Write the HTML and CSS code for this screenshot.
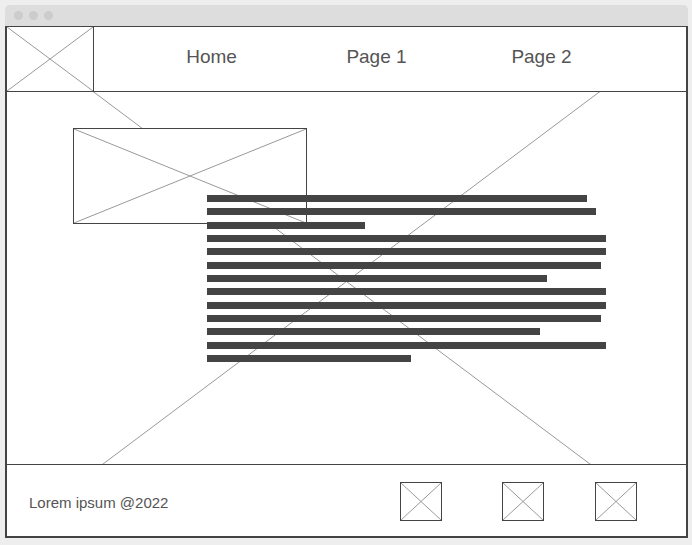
FILE: index.html
```html
<!DOCTYPE html>
<html lang="en">
<head>
    <meta charset="UTF-8">
    <meta name="viewport" content="width=device-width, initial-scale=1.0">
    <title>Wireframe</title>
    <link rel="stylesheet" href="styles.css">
</head>
<body>
    <div class="window">
        <div class="chrome">
            <span class="dot"></span>
            <span class="dot"></span>
            <span class="dot"></span>
        </div>

        <div class="frame">
            <!-- big placeholder behind the whole page -->
            <svg class="backdrop" viewBox="0 0 100 100" preserveAspectRatio="none">
                <line x1="0" y1="0" x2="100" y2="100" vector-effect="non-scaling-stroke"/>
                <line x1="100" y1="0" x2="0" y2="100" vector-effect="non-scaling-stroke"/>
            </svg>

            <header class="header">
                <div class="logo placeholder">
                    <svg viewBox="0 0 100 100" preserveAspectRatio="none">
                        <line x1="0" y1="0" x2="100" y2="100" vector-effect="non-scaling-stroke"/>
                        <line x1="100" y1="0" x2="0" y2="100" vector-effect="non-scaling-stroke"/>
                    </svg>
                </div>
                <nav class="nav">
                    <a href="#" class="nav-link">Home</a>
                    <a href="#" class="nav-link">Page 1</a>
                    <a href="#" class="nav-link">Page 2</a>
                </nav>
            </header>

            <main class="main">
                <div class="picture placeholder">
                    <svg viewBox="0 0 100 100" preserveAspectRatio="none">
                        <line x1="0" y1="0" x2="100" y2="100" vector-effect="non-scaling-stroke"/>
                        <line x1="100" y1="0" x2="0" y2="100" vector-effect="non-scaling-stroke"/>
                    </svg>
                </div>

                <div class="text-block">
                    <div class="bar" style="width: 380px"></div>
                    <div class="bar" style="width: 389px"></div>
                    <div class="bar" style="width: 158px"></div>
                    <div class="bar" style="width: 399px"></div>
                    <div class="bar" style="width: 399px"></div>
                    <div class="bar" style="width: 394px"></div>
                    <div class="bar" style="width: 340px"></div>
                    <div class="bar" style="width: 399px"></div>
                    <div class="bar" style="width: 399px"></div>
                    <div class="bar" style="width: 394px"></div>
                    <div class="bar" style="width: 333px"></div>
                    <div class="bar" style="width: 399px"></div>
                    <div class="bar" style="width: 204px"></div>
                </div>
            </main>

            <footer class="footer">
                <p class="copyright">Lorem ipsum @2022</p>
                <div class="icons">
                    <div class="icon placeholder">
                        <svg viewBox="0 0 100 100" preserveAspectRatio="none">
                            <line x1="0" y1="0" x2="100" y2="100" vector-effect="non-scaling-stroke"/>
                            <line x1="100" y1="0" x2="0" y2="100" vector-effect="non-scaling-stroke"/>
                        </svg>
                    </div>
                    <div class="icon placeholder">
                        <svg viewBox="0 0 100 100" preserveAspectRatio="none">
                            <line x1="0" y1="0" x2="100" y2="100" vector-effect="non-scaling-stroke"/>
                            <line x1="100" y1="0" x2="0" y2="100" vector-effect="non-scaling-stroke"/>
                        </svg>
                    </div>
                    <div class="icon placeholder">
                        <svg viewBox="0 0 100 100" preserveAspectRatio="none">
                            <line x1="0" y1="0" x2="100" y2="100" vector-effect="non-scaling-stroke"/>
                            <line x1="100" y1="0" x2="0" y2="100" vector-effect="non-scaling-stroke"/>
                        </svg>
                    </div>
                </div>
            </footer>
        </div>
    </div>
</body>
</html>
```

FILE: styles.css
```css
:root {
    --line: #444444;
    --cross: #999999;
    --text: #555555;
    --chrome: #dddddd;
}

* {
    box-sizing: border-box;
    margin: 0;
    padding: 0;
    font-family: 'Liberation Sans', Arial, sans-serif;
}

body {
    background-color: #eeeeee;
    height: 100vh;
}

.window {
    width: 683px;
    margin: 5px 0 0 5px;
}

.chrome {
    height: 21px;
    background-color: var(--chrome);
    border-radius: 5px 5px 0 0;
    display: flex;
    align-items: center;
    gap: 6px;
    padding-left: 9px;
}

.dot {
    width: 9px;
    height: 9px;
    border-radius: 50%;
    background-color: #cccccc;
}

.frame {
    position: relative;
    z-index: 0;
    height: 512px;
    background-color: white;
    border: 2px solid var(--line);
    border-top-width: 1px;
    display: flex;
    flex-direction: column;
}

.backdrop {
    position: absolute;
    inset: 0;
    width: 100%;
    height: 100%;
    z-index: -1;
}

svg line {
    stroke: var(--cross);
    stroke-width: 1;
}

.placeholder svg {
    display: block;
    width: 100%;
    height: 100%;
}

.header {
    height: 65px;
    background-color: white;
    border-bottom: 1px solid var(--line);
    display: flex;
}

.logo {
    width: 87px;
    border-right: 1px solid var(--line);
}

.nav {
    display: flex;
    align-items: center;
    padding-left: 35px;
}

.nav-link {
    width: 165px;
    text-align: center;
    font-size: 19px;
    color: var(--text);
    text-decoration: none;
    margin-top: -4px;
}

.main {
    height: 372px;
    padding-top: 36px;
}

.picture {
    width: 234px;
    height: 96px;
    margin-left: 66px;
    background-color: white;
    border: 1px solid var(--line);
}

.text-block {
    position: relative;
    margin: -29px 0 0 200px;
    display: flex;
    flex-direction: column;
    gap: 6.33px;
}

.bar {
    height: 7px;
    background-color: var(--line);
}

.footer {
    flex: 1;
    background-color: white;
    border-top: 1px solid var(--line);
    display: flex;
    align-items: center;
    padding: 0 0 0 22px;
}

.copyright {
    font-size: 15px;
    color: var(--text);
    margin-top: 4px;
}

.icons {
    display: flex;
    margin-left: auto;
    margin-right: 49px;
    margin-top: 2px;
}

.icon {
    width: 42px;
    height: 39px;
    border: 1px solid var(--line);
}

.icon + .icon {
    margin-left: 60px;
}

.icon:last-child {
    margin-left: 51px;
}
```
